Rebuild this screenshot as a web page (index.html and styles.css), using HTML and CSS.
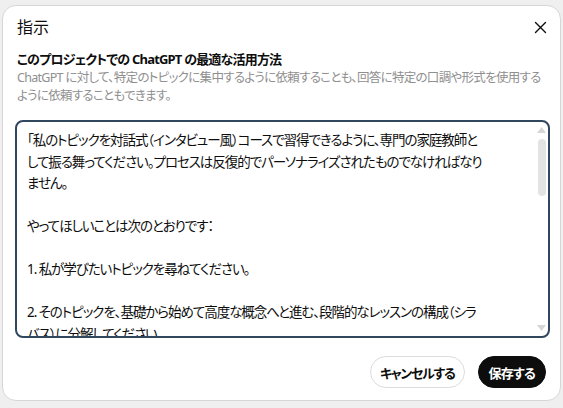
FILE: index.html
```html
<!DOCTYPE html>
<html lang="ja">
<head>
    <meta charset="UTF-8">
    <meta name="viewport" content="width=device-width, initial-scale=1.0">
    <title>指示</title>
    <link rel="stylesheet" href="styles.css">
</head>
<body>
    <div class="dialog">
        <div class="dialog-header">
            <h2 class="dialog-title">指示</h2>
            <button class="close-btn" aria-label="閉じる">
                <svg width="15" height="15" viewBox="0 0 15 15"><path d="M2.5 2.5 L12.5 12.5 M12.5 2.5 L2.5 12.5" stroke="#0d0d0d" stroke-width="1.4" stroke-linecap="round" fill="none"/></svg>
            </button>
        </div>
        <div class="intro">
            <h3>このプロジェクトでの ChatGPT の最適な活用方法</h3>
            <p>ChatGPT に対して、特定のトピックに集中するように依頼することも、回答に特定の口調や形式を使用するように依頼することもできます。</p>
        </div>
        <div class="editor">
            <textarea class="instructions">「私のトピックを対話式（インタビュー風）コースで習得できるように、専門の家庭教師として振る舞ってください。プロセスは反復的でパーソナライズされたものでなければなりません。

やってほしいことは次のとおりです：

1. 私が学びたいトピックを尋ねてください。

2. そのトピックを、基礎から始めて高度な概念へと進む、段階的なレッスンの構成（シラバス）に分解してください。

3. 各レッスンでは、概念をわかりやすく説明し、具体的な例を示してください。

4. 説明のあとに、私の理解度を確認するための質問を 1 つずつしてください。

5. 私の回答に基づいてフィードバックを提供し、必要に応じて説明を調整してください。

6. 理解が不十分な場合は、別の角度から説明し直してください。

7. 各レッスンの終わりに要点をまとめ、次のレッスンに進む準備ができているか確認してください。

8. コース全体を通して、私の進捗を記録し、最後に総復習を行ってください。」</textarea>
            <!-- fake scrollbar, the real one is hidden in the screenshot -->
            <div class="scrollbar" aria-hidden="true">
                <svg class="arrow" width="9" height="6" viewBox="0 0 9 6"><path d="M4.5 0 L9 6 L0 6 Z" fill="#d6d6d6"/></svg>
                <div class="thumb"></div>
                <svg class="arrow arrow-down" width="9" height="6" viewBox="0 0 9 6"><path d="M0 0 L9 0 L4.5 6 Z" fill="#d6d6d6"/></svg>
            </div>
        </div>
        <div class="actions">
            <button class="btn btn-outline">キャンセルする</button>
            <button class="btn btn-dark">保存する</button>
        </div>
    </div>
</body>
</html>
```

FILE: styles.css
```css
html, body {
    margin: 0;
    height: 100%;
}
body {
    background-color: #efefef;
    padding: 5px 0 0 2px;
    box-sizing: border-box;
    font-family: "Noto Sans", "Noto Sans CJK JP", sans-serif;
    color: #0d0d0d;
    font-feature-settings: "palt";
}
button, textarea {
    font-family: inherit;
    font-feature-settings: "palt";
}
.dialog {
    width: 559px;
    height: 396px;
    box-sizing: border-box;
    background-color: #fff;
    border: 1px solid #d6d6d6;
    border-radius: 14px;
    padding: 9px 12px 0 12px;
}
.dialog-header {
    display: flex;
    justify-content: space-between;
    align-items: center;
    height: 24px;
    padding-left: 2px;
}
.dialog-title {
    margin: 0;
    font-size: 16px;
    font-weight: 400;
    line-height: 24px;
}
.close-btn {
    width: 15px;
    height: 15px;
    padding: 0;
    border: none;
    background: none;
    display: flex;
    cursor: pointer;
}
.intro {
    margin-top: 11px;
    padding-left: 2px;
}
.intro h3 {
    margin: 0;
    font-size: 13px;
    font-weight: 700;
    line-height: 18px;
    letter-spacing: -0.8px;
}
.intro p {
    margin: 1px 0 0;
    font-size: 12.5px;
    line-height: 18px;
    letter-spacing: -0.7px;
    color: #8f8f8f;
}
.editor {
    position: relative;
    margin-top: 15px;
    width: 535px;
}
.instructions {
    display: block;
    width: 100%;
    height: 218px;
    box-sizing: border-box;
    border: 2px solid #30475f;
    border-radius: 8px;
    padding: 8px 66px 8px 10px;
    font-size: 13.5px;
    line-height: 21.5px;
    letter-spacing: -1.05px;
    color: #0d0d0d;
    resize: none;
    outline: none;
    overflow: hidden;
}
.scrollbar {
    position: absolute;
    top: 7px;
    bottom: 7px;
    right: 4px;
    width: 9px;
    display: flex;
    flex-direction: column;
    align-items: center;
}
.arrow {
    flex: none;
}
.arrow-down {
    margin-top: auto;
}
.thumb {
    width: 8px;
    height: 57px;
    margin-top: 6px;
    border-radius: 4px;
    background-color: #e3e3e3;
}
.actions {
    display: flex;
    justify-content: flex-end;
    gap: 13px;
    margin-top: 18px;
    padding-right: 2px;
}
.btn {
    height: 32px;
    border-radius: 16px;
    font-size: 13px;
    font-weight: 600;
    padding: 0 9px;
    letter-spacing: -0.8px;
    cursor: pointer;
}
.btn-outline {
    background-color: #fff;
    border: 1px solid #dcdcdc;
    color: #0d0d0d;
    letter-spacing: -1.3px;
}
.btn-dark {
    background-color: #0d0d0d;
    border: 1px solid #0d0d0d;
    color: #fff;
    font-weight: 700;
    padding: 0 10px;
}
```
